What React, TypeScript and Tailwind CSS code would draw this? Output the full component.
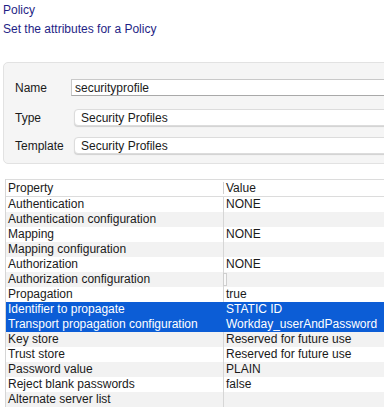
const rows: { name: string; value: string }[] = [
  { name: "Authentication", value: "NONE" },
  { name: "Authentication configuration", value: "" },
  { name: "Mapping", value: "NONE" },
  { name: "Mapping configuration", value: "" },
  { name: "Authorization", value: "NONE" },
  { name: "Authorization configuration", value: "" },
  { name: "Propagation", value: "true" },
  { name: "Identifier to propagate", value: "STATIC ID" },
  { name: "Transport propagation configuration", value: "Workday_userAndPassword" },
  { name: "Key store", value: "Reserved for future use" },
  { name: "Trust store", value: "Reserved for future use" },
  { name: "Password value", value: "PLAIN" },
  { name: "Reject blank passwords", value: "false" },
  { name: "Alternate server list", value: "" },
];

const selected = [7, 8];

const App = () => {
  return (
    <div className="w-[384px] h-[408px] overflow-hidden bg-white font-['Liberation_Sans',Arial,sans-serif] text-[12px] text-[#1a1a1a]">
      {/* Heading */}
      <div className="pt-[1px] pl-[3px] text-[#1f1f86] leading-[19px]">
        <div>Policy</div>
        <div>Set the attributes for a Policy</div>
      </div>

      {/* Attribute panel */}
      <div className="mt-[23px] ml-[3px] w-[420px] rounded-[5px] border border-[#e2e2e2] bg-[#f5f5f5] pt-[16px] pb-[9px] pl-[11px] flex flex-col">
        <div className="flex items-center h-[17px]">
          <span className="w-[56px]">Name</span>
          <div className="flex-1 h-[17px] bg-white border border-[#c9c9c9] border-b-[#a9a9a9] pl-[3px] flex items-center leading-none">
            securityprofile
          </div>
        </div>
        <div className="flex items-center h-[17px] mt-[13px]">
          <span className="w-[59px]">Type</span>
          <div className="flex-1 h-[17px] bg-white rounded-[4px] border border-[#dcdcdc] shadow-[0_1px_1px_rgba(0,0,0,0.15)] pl-[6px] flex items-center leading-none">
            Security Profiles
          </div>
        </div>
        <div className="flex items-center h-[17px] mt-[11px]">
          <span className="w-[59px]">Template</span>
          <div className="flex-1 h-[17px] bg-white rounded-[4px] border border-[#dcdcdc] shadow-[0_1px_1px_rgba(0,0,0,0.15)] pl-[6px] flex items-center leading-none">
            Security Profiles
          </div>
        </div>
      </div>

      {/* Property table */}
      <div className="mt-[15px] ml-[5px] w-[420px] border-l border-[#d6d6d6]">
        <div className="flex h-[18px] border-y border-[#dcdcdc] bg-white">
          <div className="w-[217px] pl-[2px] flex items-center">Property</div>
          <div className="w-px bg-[#d0d0d0] my-[2px]" />
          <div className="flex-1 pl-[2px] flex items-center">Value</div>
        </div>
        {rows.map((r, i) => {
          const sel = selected.includes(i);
          const bg = sel ? "bg-[#0c5dd6] text-white" : i % 2 === 1 ? "bg-[#f2f2f2]" : "bg-white";
          return (
            <div key={r.name} className={`flex h-[15px] leading-[15px] ${bg}`}>
              <div className="w-[217px] pl-[2px] whitespace-nowrap">{r.name}</div>
              <div className={`relative w-px ${sel ? "bg-transparent" : "bg-[#d6d6d6]"}`}>
                {i === 5 && (
                  <div className="absolute left-0 top-[1px] w-[4px] h-[13px] bg-[#f9f9f9] border border-[#cfcfcf]" />
                )}
              </div>
              <div className="flex-1 pl-[2px] whitespace-nowrap">{r.value}</div>
            </div>
          );
        })}
      </div>
    </div>
  );
};

export default App;
